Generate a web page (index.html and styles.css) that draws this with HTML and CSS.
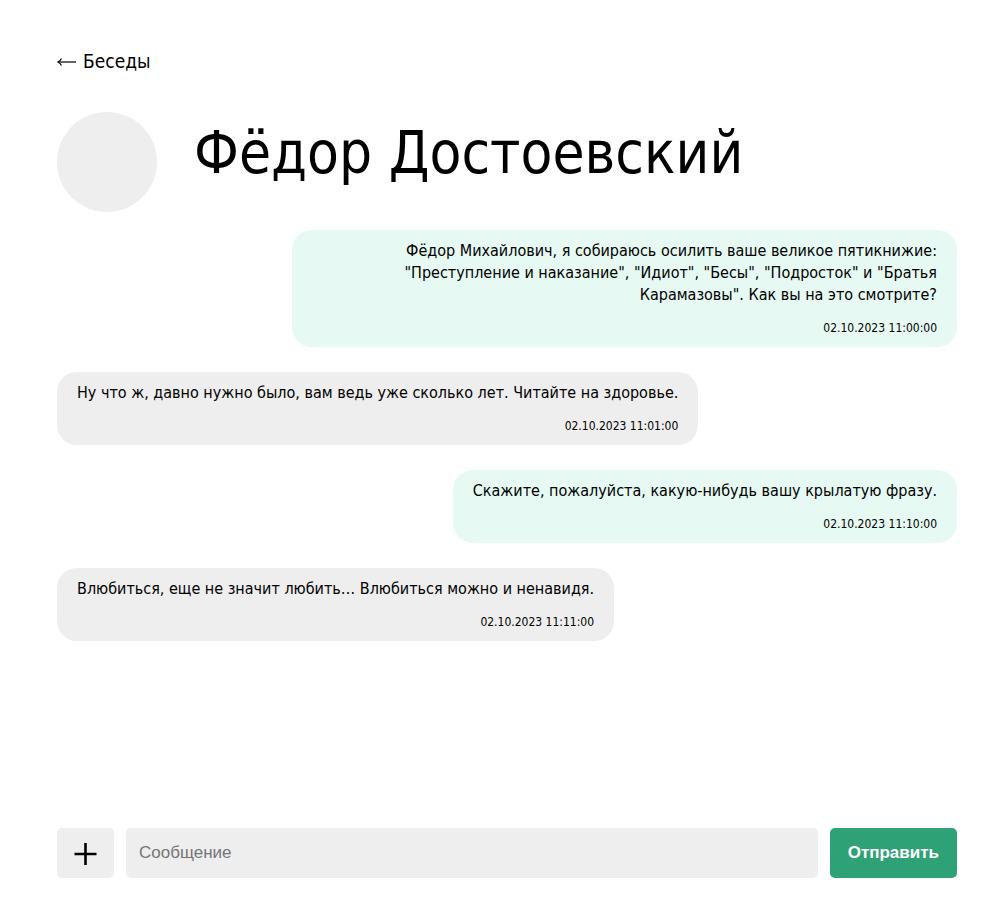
FILE: index.html
```
<!DOCTYPE html>
<html lang="ru">
<head>
<meta charset="utf-8">
<meta name="viewport" content="width=device-width, initial-scale=1">
<title>Фёдор Достоевский</title>
<link rel="stylesheet" href="styles.css">
</head>
<body>
<div class="page">
<nav><a class="back" href="#">
<svg class="arrow" viewBox="0 0 20 12" aria-hidden="true"><path d="M19 7H1.500" fill="none" stroke="currentColor" stroke-width="1.200"/><path d="M4.500 3.500Q3.200 6 1 7Q3.200 8 4.500 10.500" fill="none" stroke="currentColor" stroke-width="1.200"/></svg>
<span>Беседы</span></a></nav>
<header class="contact">
<div class="avatar"></div>
<h1 class="name">Фёдор Достоевский</h1>
</header>
<main class="messages">
<article class="message own"><p class="text">Фёдор Михайлович, я собираюсь осилить ваше великое пятикнижие: "Преступление и наказание", "Идиот", "Бесы", "Подросток" и "Братья Карамазовы". Как вы на это смотрите?</p><time class="time">02.10.2023 11:00:00</time></article>
<article class="message"><p class="text">Ну что ж, давно нужно было, вам ведь уже сколько лет. Читайте на здоровье.</p><time class="time">02.10.2023 11:01:00</time></article>
<article class="message own"><p class="text">Скажите, пожалуйста, какую-нибудь вашу крылатую фразу.</p><time class="time">02.10.2023 11:10:00</time></article>
<article class="message"><p class="text">Влюбиться, еще не значит любить… Влюбиться можно и ненавидя.</p><time class="time">02.10.2023 11:11:00</time></article>
</main>
<form class="composer">
<button class="attach" type="button" aria-label="Прикрепить"><svg class="plus" viewBox="0 0 24 24" aria-hidden="true"><path d="M11.500 2v22M0.500 13h22" stroke="currentColor" stroke-width="2.600"/></svg></button>
<input class="field" type="text" placeholder="Сообщение" aria-label="Сообщение">
<button class="send" type="submit">Отправить</button>
</form>
</div>
</body>
</html>
```
FILE: styles.css
```
* { box-sizing: border-box; }
body { margin: 0; background: #fff; color: #000; font-family: Tahoma, "DejaVu Sans Condensed", "Noto Sans", sans-serif; font-size: 16px; }
.page { display: flex; flex-direction: column; min-height: 100vh; padding: 46px 49px 46px 57px; }
.back { display: inline-flex; align-items: center; gap: 6px; color: inherit; text-decoration: none; font-size: 19px; line-height: 30px; }
.arrow { width: 20px; height: 12px; }
.contact { display: flex; align-items: center; gap: 37px; margin-top: 36px; }
.avatar { flex: none; width: 100px; height: 100px; border-radius: 50%; background: #eee; }
.name { margin: 0 0 18px; font-size: 58px; font-weight: 400; line-height: 72px; }
.messages { display: flex; flex-direction: column; align-items: flex-start; gap: 25px; flex: 1; margin: 18px 0 24px; }
.message { max-width: 665px; padding: 10px 20px; border-radius: 20px; background: #eee; text-align: right; }
.own { align-self: flex-end; background: #e6faf3; }
.text { margin: 0 0 13px; line-height: 22px; }
.time { display: block; font-size: 12px; line-height: 18px; }
.composer { display: flex; gap: 12px; }
.attach, .field, .send { height: 50px; border: 0; border-radius: 5px; font-family: "Liberation Sans", Arial, sans-serif; font-size: 17px; }
.attach { display: grid; place-items: center; flex: none; width: 57px; padding: 0; background: #eee; color: #000; }
.plus { width: 24px; height: 24px; }
.field { flex: 1; min-width: 0; padding: 0 13px; background: #eee; }
.field::placeholder { color: #757575; }
.send { flex: none; padding: 0 18px; background: #2ea176; color: #fff; font-weight: 700; }
```
